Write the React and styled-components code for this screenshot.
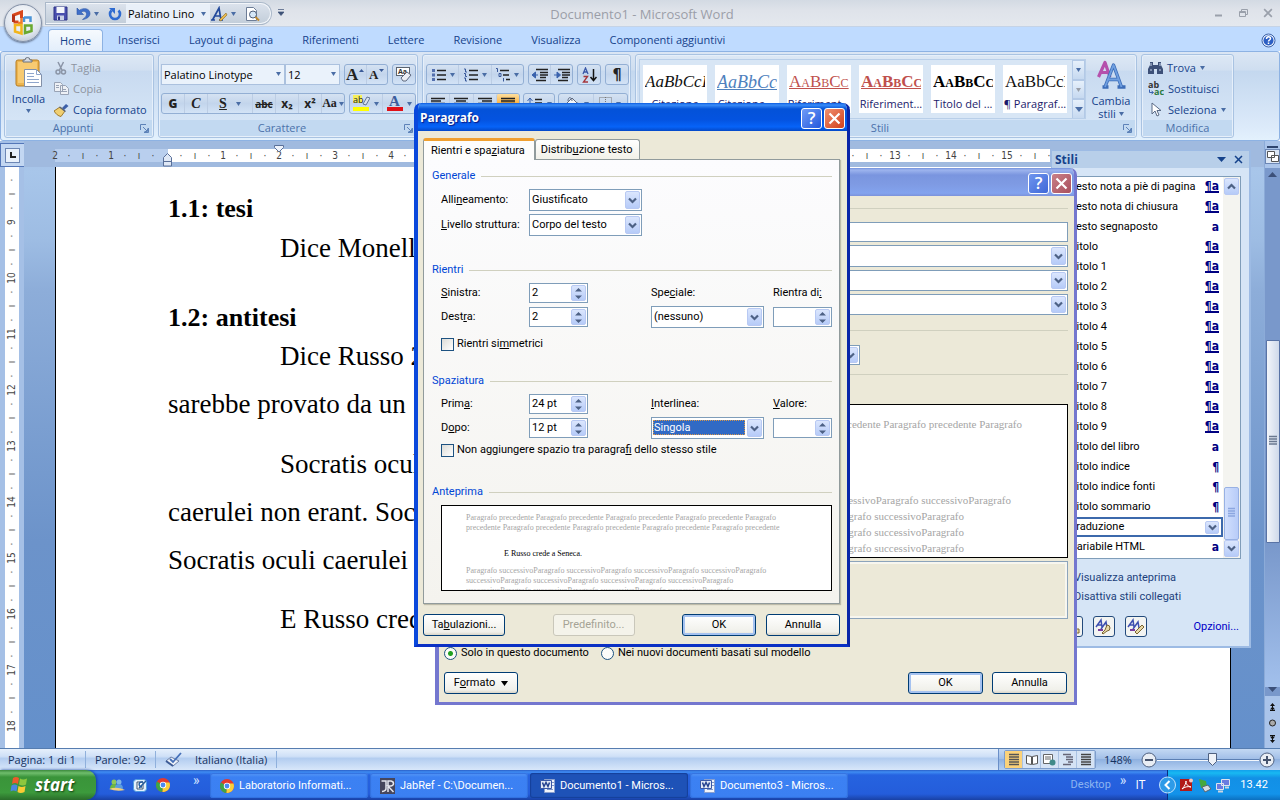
import React from 'react';
import styled, { createGlobalStyle, css } from 'styled-components';

const UI = '"Open Sans", "Noto Sans", sans-serif';
const TAHOMA = 'Roboto, "Noto Sans", sans-serif';
const RULER = '"DejaVu Sans Condensed", "DejaVu Sans", sans-serif';
const SERIF = '"Liberation Serif", serif';

const Global = createGlobalStyle`
  *, *::before, *::after { box-sizing: border-box; }
  body { margin: 0; font: 11px/16px ${UI}; color: #1e395b; overflow: hidden; }
  button, input, select { font: inherit; color: inherit; margin: 0; padding: 0; border-radius: 0; }
  button { background: none; border: 0; display: flex; align-items: center; justify-content: center; white-space: nowrap; }
  select { appearance: none; }
  svg { display: block; flex: none; }
  ul { list-style: none; margin: 0; padding: 0; }
  a { text-decoration: none; color: inherit; }
  h1, h2, p { margin: 0; font-size: inherit; font-weight: inherit; }
`;

/* ---------- window frame ---------- */
const Screen = styled.div`
  display: flex; flex-direction: column; height: 100vh; position: relative; overflow: hidden;
`;
const TitleBar = styled.header`
  display: flex; align-items: flex-start; height: 27px; padding-left: 46px;
  background: linear-gradient(#d3dae3, #dfe3ea 40%, #e4e8ee);
  border-bottom: 1px solid #c5d3e6;
`;
const QuickBar = styled.div`
  display: flex; align-items: center; height: 21px; margin-top: 3px; padding: 0 10px 0 7px;
  background: linear-gradient(#dbe2ec, #c3ceda); border: 1px solid #f3f6fa; border-left: 0; border-radius: 0 11px 11px 0;
  box-shadow: 0 0 0 1px #aab8c9;
`;
const QuickButton = styled.button`
  height: 18px; width: ${p => p.$w || 24}px; gap: 3px; justify-content: flex-start;
`;
const QuickFont = styled.select`
  width: 84px; height: 19px; border: 0; background: #e9f0f9; color: #000; padding-left: 2px;
`;
const SelectWrap = styled.span`
  display: flex; position: relative; width: ${p => p.$w}px;
  & > select { width: 100%; }
  & > svg { position: absolute; right: 4px; top: 8px; pointer-events: none; }
`;
const DocTitle = styled.h1`
  flex: 1; text-align: center; color: #9b9ea8; font-size: 13px; line-height: 28px; padding-right: 220px;
`;
const WindowButtons = styled.div`
  display: flex; gap: 14px; padding: 8px 7px 0 0;
`;
const OfficeButton = styled.button`
  position: absolute; left: 4px; top: 4px; width: 38px; height: 38px; border-radius: 50%; z-index: 3;
  background: radial-gradient(circle at 50% 35%, #fff, #dfe5ee 60%, #aab4c4); border: 1px solid #8390a6;
  box-shadow: 0 1px 2px #5d6c86;
`;
const TabStrip = styled.nav`
  display: flex; align-items: stretch; height: 24px; padding: 2px 4px 0 48px; background: #bfdbff;
`;
const RibbonTab = styled.button`
  padding: 0 14px 0 15px; color: #15428b;
  ${p => p.$active && css`
    padding: 0 11px; border: 1px solid #8db2e3; border-bottom: 0; border-radius: 4px 4px 0 0;
    background: linear-gradient(#f6fafe, #e3eefb);
  `}
`;
const Spacer = styled.span`flex: 1;`;
const Ribbon = styled.section`
  display: flex; gap: 4px; height: 90px; padding: 2px 4px 2px 3px; border: 1px solid #8db2e3; border-radius: 3px;
  background: linear-gradient(#dbe6f4, #cfdef0 20%, #c4d8ef 22%, #dceafa 85%, #e3f1fd);
  margin: 0; flex: none;
`;
const Group = styled.section`
  display: flex; flex-direction: column; justify-content: space-between; width: ${p => p.$w}px; flex: none;
  border: 1px solid #a9c3e2; border-radius: 3px; overflow: hidden;
  box-shadow: inset 0 0 0 1px #e6effa; background: linear-gradient(#dde8f5, #d2e0f1 18%, #c8daf0 20%, #d9e8f8);
`;
const WideGroup = styled(Group)`flex: 1; width: auto; max-width: 502px;`;
const GroupBody = styled.div`
  display: flex; flex: 1; min-height: 0; padding: ${p => p.$pad || '4px 3px 0'}; gap: ${p => p.$gap || 0}px;
`;
const GroupLabel = styled.h2`
  display: flex; align-items: center; height: 16px; margin: 0 1px 1px; background: #c2d9f1; color: #4b72ab;
  span { flex: 1; text-align: center; }
  svg { margin-right: 3px; }
`;
const Stack = styled.div`
  display: flex; flex-direction: column; gap: ${p => p.$gap || 0}px; align-items: ${p => p.$align || 'flex-start'};
`;
const Row = styled.div`display: flex; align-items: center; gap: ${p => p.$gap || 0}px;`;
const BigButton = styled.button`
  flex-direction: column; justify-content: flex-start; width: ${p => p.$w}px; color: #15428b; line-height: 13px;
  gap: ${p => p.$gap || 0}px;
`;
const LineButton = styled.button`
  height: 22px; gap: 4px; justify-content: flex-start; color: ${p => p.$off ? '#8d94a0' : '#15428b'};
`;
const ToolSet = styled.div`
  display: flex; align-items: stretch; height: 21px; width: ${p => p.$w}px;
  border: 1px solid #93afd4; border-radius: 3px; background: linear-gradient(#d5e2f2, #c3d5ec 50%, #d3e3f6);
`;
const Tool = styled.button`
  flex: ${p => p.$grow || 1}; gap: ${p => p.$gap || 4}px; color: #222; font: ${p => p.$font || 'inherit'};
  & + & { border-left: 1px solid #bccde4; }
  ${p => p.$on && css`background: linear-gradient(#fddfa0, #fdb23f 50%, #fee087); border-radius: 2px;`}
`;
const Combo = styled.select`
  height: 21px; border: 1px solid #abc1de; background: #eaf2fb; color: #000; padding-left: 2px;
`;
const Gallery = styled.div`
  display: flex; flex: 1; min-width: 0; border: 1px solid #b9cfe9; background: #d8e6f5; padding: 5px 0 0 3px; height: 60px; overflow: hidden;
`;
const StyleTile = styled.button`
  flex-direction: column; justify-content: flex-end; width: 64px; height: 48px; margin-right: 8px; background: #fff;
  color: #1b1b6b; overflow: hidden; line-height: 18px; flex: none;
  b { display: block; width: 60px; overflow: hidden; font: ${p => p.$font}; line-height: 26px; color: ${p => p.$color}; text-align: left;
      text-decoration: ${p => (p.$line ? 'underline' : 'none')}; }
  span { display: block; width: 64px; text-align: center; }
`;
const GalleryScroll = styled.div`
  display: flex; flex-direction: column; width: 15px; margin: -5px 0 0 -3px; height: 59px;
  button { flex: 1; border: 1px solid #b3c9e6; background: linear-gradient(#e6f0fb, #c6d9f0); }
`;

/* ---------- document area ---------- */
const Work = styled.main`
  display: flex; flex: 1; min-height: 0; position: relative;
  background: linear-gradient(#9fb9df 0, #a8c6ea 30px, #9dbce3 100px, #8dadd9 150px, #6c93ca 400px, #6490cb);
`;
const RulerColumn = styled.div`display: flex; flex-direction: column; width: 24px; background: #a5c0e6; flex: none;`;
const TabPicker = styled.button`
  width: 25px; height: 24px; margin-top: 2px; border: 1px solid #5477b8; background: #c3d7f2; flex: none;
  span { display: flex; align-items: center; justify-content: center; width: 15px; height: 15px; border: 1px solid #6d87b5; background: #e9f1fb; }
`;
const VerticalRuler = styled.div`
  display: flex; flex-direction: column; width: 14px; margin-left: 5px; padding-top: 6px; background: #fff; flex: 1; min-height: 0; overflow: hidden;
`;
const Tick = styled.span`
  flex: none; display: flex; align-items: center; justify-content: center; width: 14px; height: 14px; color: #444; font: 10px/14px ${RULER};
  ${p => p.$turn && css`transform: rotate(-90deg);`}
`;
const PageColumn = styled.div`display: flex; flex-direction: column; flex: 1; min-width: 0;`;
const HorizontalRuler = styled.div`
  display: flex; height: 26px; padding: 8px 214px 5px 24px; background: #a0badf; overflow: hidden; flex: none;
`;
const RulerScale = styled.div`
  display: flex; flex: 1; height: 13px; overflow: hidden; align-items: center;
  background: linear-gradient(90deg, transparent 7px, #b9cfee 7px, #b9cfee 120px, #fff 120px); position: relative;
`;
const IndentMark = styled.svg`position: absolute; z-index: 1; top: ${p => p.$top}px; left: ${p => p.$left}px;`;
const Page = styled.article`
  flex: 1; margin: 0 33px 0 31px; padding: 22px 112px 0; background: #fff; border-left: 1px solid #000; border-right: 1px solid #000;
  color: #000; font: 27px/48px ${SERIF}; white-space: nowrap; overflow: hidden;
`;
const Heading = styled.h2`
  font: bold 26px/40px ${SERIF}; padding-top: ${p => p.$space || 0}px;
`;
const Line = styled.p`
  padding-left: ${p => (p.$indent ? 112 : 0)}px; line-height: ${p => p.$lh || 48}px; padding-top: ${p => p.$space || 0}px;
`;
const ScrollColumn = styled.div`
  display: flex; flex-direction: column; align-items: center; width: 16px; background: #aac4ea; flex: none; border-left: 1px solid #8cabd8; padding-top: 4px;
`;
const ScrollTrack = styled.div`
  display: flex; flex-direction: column; align-items: center; width: 15px; flex: 1; background: #7998cb; margin-top: 4px; padding: 3px 0;
`;
const ScrollThumb = styled.div`
  display: flex; align-items: center; justify-content: center; width: 14px; height: 203px; border: 1px solid #5973a5; border-radius: 1px;
  background: linear-gradient(90deg, #f2f5fa, #cfd9ea); margin-top: 163px;
`;
const ScrollRest = styled.div`flex: 1; width: 15px; background: linear-gradient(#7998cb, #a2c0ec);`;
const PageJump = styled.div`display: flex; flex-direction: column; gap: 8px; padding: 7px 0 5px; align-items: center;`;

/* ---------- styles pane ---------- */
const Pane = styled.aside`
  position: absolute; top: 150px; right: 29px; width: 200px; height: 498px; display: flex; flex-direction: column;
  background: #d6e5f6; border: 1px solid #9dbbe4; border-right-width: 2px; border-bottom-width: 2px; z-index: 1; color: #1c3f7c; font: 11px/14px ${TAHOMA};
`;
const PaneHeader = styled.header`
  display: flex; align-items: center; height: 17px; background: #b8cfe9; padding: 0 6px 0 3px; gap: 8px; color: #15428b; font: bold 12px/16px ${UI};
`;
const StyleBox = styled.div`
  display: flex; height: 383px; margin: 8px 8px 0 6px; background: #fff; border: 1px solid #7f9db9; color: #000;
`;
const StyleList = styled.ul`flex: 1; min-width: 0;`;
const StyleItem = styled.li`
  display: flex; height: 20px; align-items: center; padding: 0 2px 0 9px; white-space: nowrap; border: 2px solid ${p => (p.$on ? '#3c69ac' : 'transparent')};
  span { flex: 1; }
`;
const Mark = styled.b`
  font: bold 12px/12px ${RULER}; color: #000080; border-bottom: ${p => (p.$u ? '2px solid #000080' : '0')}; height: ${p => (p.$u ? 12 : 13)}px;
  display: flex; align-items: center;
`;
const ListScroll = styled.div`
  display: flex; flex-direction: column; width: 17px; background: #f4f4f0; padding: 1px; align-items: center;
`;
const XpArrow = styled.button`
  width: ${p => p.$w || 15}px; height: ${p => p.$h || 17}px; border: 1px solid #b8c9f3; border-radius: 2px; background: linear-gradient(#dbe6fd, #b6cbf8); flex: none;
`;
const ListThumb = styled.div`
  display: flex; align-items: center; justify-content: center; width: 15px; height: 53px; border: 1px solid #98b1e4; border-radius: 2px;
  background: linear-gradient(90deg, #d1dffd, #b8ccf8);
`;
const PaneGap = styled.div`height: 9px;`;
const PaneLabel = styled.label`display: flex; align-items: center; gap: 4px; height: 19px; padding-left: 5px; white-space: nowrap;`;
const PaneTools = styled.div`
  display: flex; align-items: center; gap: 10px; padding: 10px 10px 0 9px;
  a { margin-left: auto; color: #0000c8; }
`;
const PaneTool = styled.button`width: 22px; height: 21px; border: 1px solid #234a7c; border-radius: 3px; background: #f3f4f2;`;

/* ---------- XP dialogs ---------- */
const Dialog = styled.section`
  position: absolute; left: ${p => p.$x}px; top: ${p => p.$y}px; width: ${p => p.$w}px; height: ${p => p.$h}px; z-index: ${p => p.$z};
  display: flex; flex-direction: column; border-radius: 7px 7px 0 0; overflow: hidden; background: #ece9d8; color: #000; font: 11px/14px ${TAHOMA};
  border: solid #7477cf; border-width: 0 3px 3px 4px;
  ${p => p.$active && css`border-color: #0a48dc #0a25a8 #0a30c4 #0a48dc;`}
`;
const DialogTitle = styled.header`
  display: flex; align-items: center; gap: 2px; height: 28px; margin: 0 -3px 0 -4px; padding: 2px 5px 0 6px; flex: none;
  background: ${p => (p.$active ? 'linear-gradient(#0a5be0, #3a8cf8 2px, #0452d8 6px, #0453e0 60%, #0663f8 85%, #0448c8)' : 'linear-gradient(#7090dc, #9db4ee 2px, #7a95df 7px, #7f9be4 60%, #83a3ee 90%, #7c92da)')};
  h1 { flex: 1; color: #fff; font: bold 12px/18px ${UI}; text-shadow: 1px 1px 1px #0a1883; }
`;
const CaptionButton = styled.button`
  width: 21px; height: 21px; border: 1px solid #fff; border-radius: 3px; color: #fff; font: 600 17px/18px ${UI};
  background: ${p => p.$bg};
`;
const TabRow = styled.div`display: flex; align-items: flex-end; padding: 7px 4px 0 5px; height: 28px; flex: none;`;
const SheetTab = styled.button`
  height: ${p => (p.$active ? 22 : 20)}px; padding: 0 ${p => (p.$active ? 9 : 6)}px 0 ${p => (p.$active ? 7 : 5)}px; border: 1px solid #919b9c; border-bottom: 0; border-radius: 3px 3px 0 0;
  background: linear-gradient(#fff, #f2f1e9); margin-bottom: ${p => (p.$active ? -1 : 0)}px;
  ${p => p.$active && css`border-top: 3px solid #f0a030; background: #fdfdfc; position: relative;`}
`;
const Sheet = styled.div`
  display: flex; flex-direction: column; margin: 0 7px 0 5px; padding: 9px 7px 0 8px; height: 445px;
  border: 1px solid #919b9c; background: linear-gradient(#fcfcfe, #f4f3ee); box-shadow: 1px 1px 1px #bdbba9;
`;
const Legend = styled.h2`
  display: flex; align-items: center; gap: 6px; height: 14px; color: #0046d5; margin-top: ${p => p.$top || 0}px; flex: none;
  &::after { content: ''; flex: 1; height: 1px; background: #d0d0bf; }
`;
const Fields = styled.div`
  display: grid; grid-template-columns: 88px 59px 63px 113px 9px 59px; grid-template-rows: ${p => p.$rows}; row-gap: 3px; align-items: center;
  margin: 6px 0 0 9px;
`;
const Label = styled.label`grid-column: ${p => p.$col || 1}; white-space: nowrap;`;
const Picker = styled.span`
  display: flex; grid-column: ${p => p.$col || 'auto'}; height: ${p => p.$h || 22}px; width: ${p => p.$w || '113px'}; padding: 1px; border: 1px solid #7f9db9; background: #fff;
  select { flex: 1; min-width: 0; border: 0; background: #fff; padding-left: 1px; outline: 0; }
  ${p => p.$selected && css`select { background: #316ac5; color: #fff; margin: 1px 2px 2px 0; outline: 1px dotted #d8974a; outline-offset: -1px; }`}
`;
const SpinBox = styled.span`
  display: flex; grid-column: ${p => p.$col || 'auto'}; height: 20px; width: 59px; padding: 1px; border: 1px solid #7f9db9; background: #fff;
  input { flex: 1; min-width: 0; border: 0; background: none; padding-left: 1px; }
`;
const Check = styled.label`
  display: flex; align-items: center; gap: 3px; height: 14px; margin: ${p => p.$top}px 0 0 9px; flex: none;
  input { appearance: none; width: 13px; height: 13px; border: 1px solid #1d5281; background: linear-gradient(135deg, #dcdcd7, #fff); }
`;
const Preview = styled.div`
  height: ${p => p.$h}px; border: 1px solid #000; background: #fff; overflow: hidden; color: #a5a5a5; white-space: nowrap; flex: none;
`;
const PreviewFrame = styled.div`margin: 6px 0 0 9px;`;
const MiniText = styled.div`
  padding: 7px 0 0 24px; font: 8px/10px ${SERIF};
  b { display: block; color: #000; padding: 16px 0 7px 38px; font-weight: normal; }
  span { display: block; }
`;
const XpButton = styled.button`
  width: ${p => p.$w}px; height: 22px; border: 1px solid #003c74; border-radius: 3px; background: linear-gradient(#fff, #f0f0ea 85%, #d9d5c8); gap: 6px; color: #000;
  ${p => p.$primary && css`box-shadow: inset 0 0 0 2px #a5c2f0;`}
  &:disabled { color: #a5a395; border-color: #c9c7ba; background: #f4f3ea; }
`;
const ButtonRow = styled.div`
  display: flex; align-items: center; padding: ${p => p.$pad}; gap: ${p => p.$gap}px;
`;
const Rule = styled.hr`border: 0; border-top: 1px solid #d0d0bf; height: 0; margin: ${p => p.$m}; flex: none;`;
const ModifyBody = styled.div`display: flex; flex-direction: column; align-items: stretch; padding: 12px 6px 0 5px;`;
const NameInput = styled.input`height: 20px; border: 1px solid #7f9db9; background: #fff; margin: 13px 0 3px;`;
const PickerRow = styled.div`display: flex; flex-direction: column; gap: 3px;`;
const PreviewLine = styled.p`
  font: 11px/16px ${SERIF}; text-align: right; padding-right: ${p => p.$end}px; margin-top: ${p => p.$top || 0}px;
`;
const Description = styled.div`height: 58px; border: 1px solid #8ca4bb; box-shadow: inset 0 0 0 2px #f7f6ef; margin-top: 3px;`;
const Radio = styled.label`
  display: flex; align-items: center; gap: 4px;
  input { appearance: none; width: 13px; height: 13px; border: 1px solid #1d5281; border-radius: 50%; background: #fbfbf9; }
  input:checked { background: radial-gradient(circle, #21a121 0 2px, #fbfbf9 3px); }
`;

/* ---------- status bar and taskbar ---------- */
const StatusBar = styled.footer`
  display: flex; align-items: center; height: 22px; flex: none; padding: 0 5px 0 8px; color: #15325f;
  border-top: 1px solid #567db0; background: linear-gradient(#e6f0fc, #cfe0f7 35%, #b3cdf0 45%, #d8e7fa);
`;
const StatusItem = styled.span`
  padding: 0 9px 0 ${p => p.$l || 0}px; border-right: 1px solid #8fb0dc; line-height: 17px; margin-right: 9px; white-space: nowrap;
`;
const ViewSet = styled.div`
  display: flex; height: 19px; border: 1px solid #7d9dcc; border-radius: 2px; margin-right: 8px; background: #d5e3f5;
  button { width: 18px; border-right: 1px solid #aac2e2; }
  button:first-child { background: #fbd27a; }
`;
const ZoomValue = styled.span`width: 37px;`;
const ZoomLine = styled.div`
  position: relative; display: flex; align-items: center; width: 102px; height: 20px;
  &::before { content: ''; width: 100%; height: 1px; background: #5b7fb3; box-shadow: 0 1px #f2f7fd; }
  svg { position: absolute; left: 51px; top: 3px; }
`;
const ZoomRight = styled.div`
  display: flex; align-items: center; height: 21px; padding-left: 5px; border-left: 1px solid #6a8fc8; margin-right: -5px; padding-right: 5px;
  background: linear-gradient(#c3d8f3, #a3c0e8 45%, #8fb1e0 50%, #b5d0f2);
`;
const Taskbar = styled.footer`
  display: flex; align-items: stretch; height: 30px; flex: none; color: #fff; font: 11px/14px ${TAHOMA};
  background: linear-gradient(#2a60c8, #3f8cf3 2px, #2663e0 5px, #245ddb 80%, #1941a5);
`;
const Start = styled.button`
  width: 96px; border-radius: 0 10px 10px 0; gap: 6px; padding-right: 12px; font: italic bold 17px/24px ${UI}; text-shadow: 1px 1px 2px #123c0f; color: #fff;
  background: linear-gradient(#3c8a3c, #6fbd6c 3px, #3a943a 7px, #3c9a3c 75%, #2a6c2a); box-shadow: 1px 0 3px #123f9c;
`;
const QuickLaunch = styled.div`display: flex; align-items: center; gap: 8px; width: 113px; padding-left: 13px;
  span { margin: -10px 0 0 15px; color: #cfe0ff; font-size: 14px; }
`;
const Task = styled.button`
  flex: 0 1 158px; margin: 3px 1px 2px; padding-left: 10px; gap: 5px; justify-content: flex-start; border-radius: 3px;
  background: ${p => (p.$on ? '#1e52b7' : 'linear-gradient(#5a9bf8, #3c81f3 4px, #3b80f2)')};
  box-shadow: inset 0 0 1px 1px ${p => (p.$on ? '#15409a' : '#3270de')};
`;
const DeskTools = styled.div`display: flex; align-items: center; gap: 9px; padding-right: 22px; color: #8cb4f0;
  span { margin-top: -10px; font-size: 14px; color: #cfe0ff; } b { font: 12px/14px ${UI}; color: #fff; }
`;
const Tray = styled.div`
  display: flex; align-items: center; gap: 3px; padding-right: 12px; border-left: 1px solid #0b2f80; background: linear-gradient(#12a0ec, #18b9f2 3px, #1290e6 8px, #1393ea 80%, #0c70c0);
  svg:first-child { margin-left: -9px; } time { padding-left: 7px; }
`;

/* ---------- icons ---------- */
const Down = ({ c = '#4a6da5', s = 5 }) => <svg width={s} height={s > 5 ? 5 : 4} viewBox="0 0 5 3" preserveAspectRatio="none"><path d="M0 0h5L2.500 3z" fill={c} /></svg>;
const Up = () => <svg width="5" height="12" viewBox="0 0 5 12"><path d="M0 3h5L2.500 0z" fill="#3a5a98" /></svg>;
const DownHigh = () => <svg width="5" height="12" viewBox="0 0 5 12"><path d="M0 0h5L2.500 3z" fill="#3a5a98" /></svg>;
const Chevron = ({ up, w = 9 }) => (
  <svg width={w} height="7" viewBox="0 0 9 7"><path d={up ? 'M1 5.500L4.500 2L8 5.500' : 'M1 1.500L4.500 5L8 1.500'} stroke="#4d6185" strokeWidth="2.200" fill="none" /></svg>
);
const Launcher = () => (
  <svg width="9" height="9" viewBox="0 0 9 9" fill="none" stroke="#5d82b8"><path d="M.5 6V.5H6M8.500 4v4.500H4M3 3l4 4M7.500 4.500v3h-3" /></svg>
);
const Office = () => (
  <svg width="26" height="26" viewBox="0 0 26 26" fill="none">
    <path d="M3.500 12V5l8-3v6M3.500 12h5" stroke="#d8481c" strokeWidth="3" /><path d="M3.500 5v7" stroke="#b5331a" strokeWidth="3" />
    <path d="M14 7.500h6.500V12M14 7v5" stroke="#4a94d8" strokeWidth="2.500" /><path d="M11.500 8v5H8" stroke="#ee7a2d" strokeWidth="2.500" />
    <path d="M11.500 15H5v6.500l6.500 2z" stroke="#f2b51c" strokeWidth="2.500" /><path d="M15 15.500h6.500V21L15 23z" stroke="#6aa92f" strokeWidth="2.500" />
  </svg>
);
const Save = () => (
  <svg width="15" height="15" viewBox="0 0 15 15"><path d="M1 1h13v13H1z" fill="#4a4fae" stroke="#2d3285" /><path d="M3.500 1h8v6h-8z" fill="#f4f6fb" /><path d="M4 9.500h7V14H4z" fill="#c9d0e6" /><path d="M5 10.500h2V14H5z" fill="#2d3285" /></svg>
);
const Undo = () => <svg width="15" height="14" viewBox="0 0 15 14"><path d="M1 1v6.500h6.500L5.200 5.300C8 3 11 5 10.500 7.500 10.200 10 8.500 11 6.500 12.500c4-.5 7.500-2.500 7.500-6C14 1.500 8 .2 3.300 3.300z" fill="#3f6fc9" stroke="#2c55a5" strokeWidth=".6" /></svg>;
const Redo = () => <svg width="14" height="14" viewBox="0 0 14 14"><path d="M3.500 3.500A5 5 0 1 0 10.500 3.500" fill="none" stroke="#2e6bd0" strokeWidth="2.600" /><path d="M1 1h6v6z" fill="#2e6bd0" /></svg>;
const APen = () => (
  <svg width="18" height="16" viewBox="0 0 18 16"><path d="M1 14h4M9 14h4M2.500 14L9 2l2 12M5 10h5" fill="none" stroke="#234a9c" strokeWidth="1.700" /><path d="M9 14l7-7 1 2-6 6z" fill="#e9b94e" stroke="#8b6a1f" strokeWidth=".6" /></svg>
);
const PageFind = () => (
  <svg width="16" height="16" viewBox="0 0 16 16"><path d="M2.500 1.500h7l3 3v10h-10z" fill="#fff" stroke="#6d7d96" /><circle cx="9" cy="8.500" r="3.500" fill="#d6e8f8" stroke="#4d5d78" /><path d="M11.500 11l3.500 3.500" stroke="#c08a2f" strokeWidth="2" /></svg>
);
const Clipboard = () => (
  <svg width="28" height="31" viewBox="0 0 28 31"><rect x="1" y="3" width="23" height="26" rx="2" fill="#edb54f" stroke="#b67c22" /><path d="M3 5h19v21H3z" fill="#f7ca72" /><path d="M8 5V3h2a2.500 2.500 0 0 1 5 0h2v2z" fill="#d5dae1" stroke="#68717f" /><path d="M9.500 12.500h12l5 5v12h-17z" fill="#fff" stroke="#8290a8" /><path d="M21.500 12.500v5h5M12 16.500h7M12 19.500h7M12 22.500h12M12 25.500h12" stroke="#8fa6cc" fill="none" /></svg>
);
const Scissors = () => <svg width="13" height="14" viewBox="0 0 13 14" fill="none" stroke="#8b95a6" strokeWidth="1.500"><path d="M4 1l4 8M9.500 1L5.500 9" /><circle cx="4" cy="11" r="2" /><circle cx="9.500" cy="11" r="2" /></svg>;
const CopyIcon = () => <svg width="15" height="13" viewBox="0 0 15 13" fill="#eef1f6" stroke="#99a3b5"><path d="M.5.5h6l2 2v7h-8zM6.500 3.500h5l3 3v6h-8z" /><path d="M8 7.500h4M8 9.500h5M2 3.500h3M2 5.500h3" /></svg>;
const Brush = () => <svg width="15" height="14" viewBox="0 0 15 14"><path d="M8 5l4-4 2.500 2-4.500 4z" fill="#3c5fa8" /><path d="M0 8l6-4 5 4-4 5.500C4 13 2 11 0 8z" fill="#f0cf72" stroke="#a07a2a" /><path d="M5.500 4l6 4.500" stroke="#5a6478" strokeWidth="1.500" /></svg>;
const Eraser = () => <svg width="18" height="17" viewBox="0 0 18 17"><rect x="1.500" y="1.500" width="13" height="8" fill="#fff" stroke="#5b6470" /><text x="3" y="8" fontSize="7" fontFamily="Open Sans" fontWeight="bold" fill="#333">Aa</text><path d="M6 12l6-6 4 3-5 6H8z" fill="#eceff5" stroke="#5f6a80" /></svg>;
const Lines = ({ rows, c = '#222', w = 14 }) => (
  <svg width={w} height="13" viewBox={`0 0 ${w} 13`}><path d={rows.map(([a, b], i) => `M${a} ${1.5 + i * 2.5}H${b}`).join('')} stroke={c} strokeWidth="1.400" /></svg>
);
const Bullets = ({ kind }) => (
  <svg width="15" height="14" viewBox="0 0 15 14">
    {kind === 'multi'
      ? <><path d="M5 2.500h9M8 7h6M11 11.500h4" stroke="#222" strokeWidth="1.300" /><path d="M1 .5h1.500V4M4 5.500h2V8.500H4zM8.500 10v3.500" fill="none" stroke="#39589a" /></>
      : <><path d="M6 2.500h9M6 7h9M6 11.500h9" stroke="#222" strokeWidth="1.300" />{[2.5, 7, 11.5].map(y => kind === 'dot'
        ? <rect key={y} x="1" y={y - 1.5} width="3" height="3" fill="#5470ae" />
        : <path key={y} d={`M1 ${y - 1.5}h1.500V${y + 1.5}H4`} fill="none" stroke="#39589a" />)}</>}
  </svg>
);
const Indent = ({ right }) => (
  <svg width="16" height="14" viewBox="0 0 16 14"><path d="M4 1.500h12M8 4.500h8M8 7h8M8 9.500h6M4 12.500h10" stroke="#222" strokeWidth="1.400" /><path d={right ? 'M0 7h4M3 4l3.500 3L3 10z' : 'M6 7H2M3.500 4L0 7l3.500 3z'} stroke="#3a62ad" fill="#3a62ad" /></svg>
);
const Sort = () => (
  <svg width="15" height="16" viewBox="0 0 15 16" fill="none"><path d="M1 7l2.500-6L6 7M2 5h3" stroke="#3a57a8" strokeWidth="1.300" /><path d="M1.500 9.500h4L1.500 15h4.500" stroke="#a5363c" strokeWidth="1.400" /><path d="M11.500 2v11M8.500 10l3 3.500 3-3.500" stroke="#111" strokeWidth="1.500" /></svg>
);
const Spacing = () => <svg width="16" height="13" viewBox="0 0 16 13"><path d="M3 1v11M.5 4L3 1l2.500 3M.5 9L3 12l2.500-3" stroke="#3a62ad" fill="none" /><path d="M8 2.500h7M8 6h7M8 9.500h7" stroke="#222" strokeWidth="1.400" /></svg>;
const Bucket = () => <svg width="17" height="14" viewBox="0 0 17 14"><path d="M3 7l6-6 5 5-6 6z" fill="#f3f6fa" stroke="#5f6a80" /><path d="M5 4c0-5 4-4 4 0" stroke="#5f6a80" fill="none" /><path d="M14 6c2 2 2 4 1 5" stroke="#3a62ad" strokeWidth="2" fill="none" /></svg>;
const Borders = () => <svg width="13" height="13" viewBox="0 0 13 13"><path d="M.5.5h12v12H.5zM6.500 0v13M0 6.500h13" stroke="#777" strokeDasharray="1 1" fill="none" /></svg>;
const Highlight = () => (
  <svg width="17" height="17" viewBox="0 0 17 17"><path d="M0 0h9v8H0z" fill="#f5ef5a" /><text x="0" y="8" fontSize="9" fontFamily="Open Sans" fill="#222">ab</text><path d="M10 9l4-7 3 1-4 7z" fill="#d8e2f0" stroke="#4a5d80" strokeWidth=".8" /><path d="M0 12h16v4H0z" fill="#ffff00" /></svg>
);
const FontColor = () => <svg width="16" height="17" viewBox="0 0 16 17"><text x="2" y="11" fontSize="15" fontWeight="bold" fontFamily="Liberation Serif" fill="#3b5d9d">A</text><path d="M0 12h16v4H0z" fill="#e01018" /></svg>;
const CambiaIcon = () => (
  <svg width="30" height="30" viewBox="0 0 30 30" fill="none" strokeLinejoin="round">
    <path d="M2.500 18L9 3.500l5 14.500M4.500 13.500h8" stroke="#b551ac" strokeWidth="3.200" />
    <path d="M9 28L17.500 6l8 22M12 20.500h11M6.500 28h6M21.500 28h8" stroke="#3d6db8" strokeWidth="3.400" />
    <path d="M9 28L17.500 6l8 22M12 20.500h11" stroke="#6f9fe0" strokeWidth="1.800" />
  </svg>
);
const Binoculars = () => <svg width="15" height="13" viewBox="0 0 15 13"><path d="M2 1h3v3h5V1h3v3l2 4v5H9V8H6v5H0V8l2-4z" fill="#3d5078" /><path d="M2 9h2M11 9h2M3 2v3M12 2v3" stroke="#c7d4ea" /></svg>;
const Replace = () => (
  <svg width="16" height="15" viewBox="0 0 16 15" fontFamily="Open Sans" fontSize="9" fontWeight="bold"><text x="0" y="7" fill="#333">ab</text><text x="6" y="14" fill="#2b7a3f">ac</text><path d="M1.500 8.500v3H5M3.500 10l2 1.500-2 1.500" fill="none" stroke="#3a62ad" /></svg>
);
const Pointer = () => <svg width="16" height="15" viewBox="0 0 16 15"><path d="M4 1v11l3-3 2 5 2-1-2-4.500h4z" fill="#fff" stroke="#5a6a85" /></svg>;
const HelpBadge = () => <svg width="15" height="15" viewBox="0 0 15 15"><circle cx="7.500" cy="7.500" r="6.500" fill="#e8f0fb" stroke="#3d62a8" /><circle cx="7.500" cy="7.500" r="5" fill="#2c5fc4" /><path d="M5.500 6c0-3 4-3 4-.5C9.500 7 7.500 7 7.500 8.500M7.500 9.500v1.500" stroke="#fff" strokeWidth="1.500" fill="none" /></svg>;
const Cross = ({ c = '#fff', s = 13, w = 2.2 }) => <svg width={s} height={s} viewBox="0 0 13 13"><path d="M1.500 1.500l10 10M11.500 1.500l-10 10" stroke={c} strokeWidth={w} /></svg>;
const Chrome = () => (
  <svg width="14" height="14" viewBox="0 0 14 14"><circle cx="7" cy="7" r="7" fill="#e33b2e" /><path d="M7 7L.9 3.500A7 7 0 0 0 6.500 14z" fill="#3ea548" /><path d="M7 7l-.5 7A7 7 0 0 0 13.500 4.500H7z" fill="#f9d03b" /><circle cx="7" cy="7" r="3.200" fill="#fff" /><circle cx="7" cy="7" r="2.400" fill="#4a8af0" /></svg>
);
const WordIcon = () => <svg width="15" height="16" viewBox="0 0 15 16"><path d="M4.500 1.500h10v13h-10z" fill="#f2f5fb" stroke="#8aa0cf" /><path d="M7 11.500h6M12 4.500h2M12 7.500h2" stroke="#7e96c8" /><path d="M.5 2.500h11v8H.5z" fill="#e4eaf6" stroke="#3b58a6" /><path d="M2.500 4.500l1.500 4 2-4 2 4 1.500-4" stroke="#24418f" strokeWidth="1.500" fill="none" /></svg>;
const JabRef = () => <svg width="15" height="16" viewBox="0 0 15 16"><path d="M0 0h15v16H0z" fill="#46465c" /><path d="M1.500 3H6v7.500Q6 13 2 13.500M8 14V3h3q2.500.5 2.500 2.500T11 8H8l5.500 6" stroke="#e5e6ee" strokeWidth="1.500" fill="none" /></svg>;
const Flag = () => <svg width="19" height="18" viewBox="0 0 19 18"><path d="M3 2q3-2 6 0L8 8q-3-2-6 0z" fill="#ec5a2c" /><path d="M10 2.500q3 2 7 0l-1 6q-3 2-7 0z" fill="#8ec73e" /><path d="M1.500 9.500q3-2 6 0l-1 6q-3-2-6 0z" fill="#4a86e0" /><path d="M8.500 10q3 2 7 0l-1 6q-4 2-7 0z" fill="#fbcb34" /></svg>;
const People = () => <svg width="16" height="14" viewBox="0 0 16 14"><circle cx="5" cy="4" r="2.500" fill="#8fc85a" /><circle cx="10" cy="4" r="2.500" fill="#7db5e8" /><path d="M1 11q0-5 4-5t5 5z" fill="#6db843" /><path d="M6 10q0-4 4-4t4 5z" fill="#5b9de0" /><path d="M0 11q8-3 16 1-8 2-16-1z" fill="#f2cf7e" /></svg>;
const Desk = () => <svg width="15" height="15" viewBox="0 0 15 15"><rect x=".5" y="1.500" width="13" height="12" rx="3" fill="#e3f0fc" stroke="#4d9ade" /><path d="M4 4h6v7H4z" fill="#fff" stroke="#41566f" /><path d="M6 10l7-7M10 4c-5-1-5 5-1 5" stroke="#245c9e" strokeWidth="1.500" fill="none" /></svg>;
const Spell = () => <svg width="18" height="15" viewBox="0 0 18 15"><path d="M1 9l5-4 8 4-6 5z" fill="#eef2f9" stroke="#6b7fa6" /><path d="M1 9l7 5" stroke="#3d5c97" strokeWidth="2" /><path d="M5 7l3 3 8-9" stroke="#4570b8" strokeWidth="1.800" fill="none" /></svg>;
const Jump = ({ kind }) => (
  <svg width="7" height="8" viewBox="0 0 7 8">{kind === 'dot' ? <circle cx="3.500" cy="4" r="3" fill="#aaa" stroke="#222" /> : <path d={kind === 'up' ? 'M1 3L3.500 0 6 3H4v1l2 2.500H4V7h2v1H1V7h2v-.5H1L3 4V3z' : 'M1 5l2.500 3L6 5H4V4l2-2.500H4V1h2V0H1v1h2v.5H1L3 4v1z'} fill="#111" />}</svg>
);
const Zoom = ({ plus }) => <svg width="16" height="16" viewBox="0 0 16 16"><circle cx="8" cy="8" r="7" fill="#e8edf4" stroke="#4f6180" /><path d={plus ? 'M4 8h8M8 4v8' : 'M4 8h8'} stroke="#46546e" strokeWidth="2" /></svg>;
const StyleTool = ({ c }) => <svg width="18" height="17" viewBox="0 0 18 17"><path d="M1 9l5-7 1 7M3 7h4M6 11l5-7 1 6" stroke="#3d4fb0" strokeWidth="1.500" fill="none" /><path d={c} fill="#e8d9a8" stroke="#7a6430" /><path d="M3 12h5" stroke="#7a3c9c" strokeWidth="2" /></svg>;
const SpinArrows = () => <svg width="9" height="13" viewBox="0 0 9 13"><path d="M1 4.500L4.500 1 8 4.500zM1 8.500L4.500 12 8 8.500z" fill="#4d6185" /></svg>;

/* ---------- small composites ---------- */
const Center = styled.span`display: flex; align-items: center; justify-content: center; width: 100%; height: 100%;`;
const Inline = styled.span`display: flex; align-items: center; justify-content: center; gap: 3px;`;
const QuickMore = styled.button`width: 20px; height: 24px;`;
const RulerToggle = styled.button`width: 15px; height: 15px; border: 1px solid #6c87b5; background: #dbe6f5;`;

function Choice({ id, value, label, ...rest }) {
  return (
    <Picker {...rest}>
      <select id={id} aria-label={label} defaultValue={value}><option>{value}</option></select>
      <XpArrow as="span" $w={15} $h={rest.$h ? rest.$h - 4 : 18}><Center><Chevron /></Center></XpArrow>
    </Picker>
  );
}
function Spin({ id, value = '', $col }) {
  return (
    <SpinBox $col={$col}>
      <input id={id} defaultValue={value} />
      <XpArrow $w={15} $h={16} aria-label="Incrementa"><SpinArrows /></XpArrow>
    </SpinBox>
  );
}
const rulerNumbers = ['2', '1', '', '1', '2', '3', '4', '5', '6', '7', '8', '9', '10', '11', '12', '13', '14', '15'];
const verticalNumbers = [9, 10, 11, 12, 13, 14, 15, 16, 17, 18];
const tiles = [
  ['AaBbCcI', 'Citazione', `italic 17px ${SERIF}`, '#111', false],
  ['AaBbCc', 'Citazione ...', `italic 18px ${SERIF}`, '#4f81bd', true],
  ['AaBbCc', 'Riferiment...', `small-caps 17px ${SERIF}`, '#c0504d', true],
  ['AaBbCc', 'Riferiment...', `small-caps bold 17px ${SERIF}`, '#c0504d', true],
  ['AaBbCc', 'Titolo del ...', `small-caps bold 17px ${SERIF}`, '#000', false],
  ['AaBbCcI', '¶ Paragraf...', `17px ${SERIF}`, '#111', false],
];
const styleNames = [
  ['Testo nota a piè di pagina', '¶a'], ['Testo nota di chiusura', '¶a'], ['Testo segnaposto', 'a'], ['Titolo', '¶a'],
  ...[1, 2, 3, 4, 5, 6, 7, 8, 9].map(n => [`Titolo ${n}`, '¶a']),
  ['Titolo del libro', 'a'], ['Titolo indice', '¶'], ['Titolo indice fonti', '¶'], ['Titolo sommario', '¶'], ['Traduzione', 'v'], ['Variabile HTML', 'a'],
];
const full = [[0, 14], [0, 14], [0, 14], [0, 14], [0, 14]];

function StylesPane() {
  return (
    <Pane>
      <PaneHeader><span>Stili</span><Spacer /><Down c="#15428b" s={9} /><Cross c="#15428b" s={9} /></PaneHeader>
      <StyleBox>
        <StyleList>
          {styleNames.map(([name, mark]) => (
            <StyleItem key={name} $on={mark === 'v'}>
              <span>{name}</span>
              {mark === 'v' ? <XpArrow $w={14} $h={13} aria-label="Apri"><Chevron /></XpArrow> : <Mark $u={mark === '¶a'}>{mark}</Mark>}
            </StyleItem>
          ))}
        </StyleList>
        <ListScroll>
          <XpArrow aria-label="Su"><Chevron up /></XpArrow><Spacer />
          <ListThumb><Lines w={7} c="#8ca6e0" rows={[[0, 7], [0, 7], [0, 7], [0, 7]]} /></ListThumb>
          <XpArrow aria-label="Giù"><Chevron /></XpArrow>
        </ListScroll>
      </StyleBox>
      <div>
        <PaneGap />
        <PaneLabel><input type="checkbox" />Visualizza anteprima</PaneLabel>
        <PaneLabel><input type="checkbox" />Disattiva stili collegati</PaneLabel>
      </div>
      <PaneTools>
        <PaneTool aria-label="Nuovo stile"><StyleTool c="M11 11h5v4h-5z" /></PaneTool>
        <PaneTool aria-label="Controllo stili"><StyleTool c="M12 7a3 3 0 1 1 0 6l-4 3-1-1 3-3z" /></PaneTool>
        <PaneTool aria-label="Gestisci stili"><StyleTool c="M8 14l7-7 2 2-7 7z" /></PaneTool>
        <a href="#opzioni">Opzioni...</a>
      </PaneTools>
    </Pane>
  );
}

function ModifyDialog() {
  return (
    <Dialog $x={435} $y={168} $w={642} $h={537} $z={2}>
      <DialogTitle>
        <Spacer />
        <CaptionButton $bg="linear-gradient(135deg, #6f95ee, #3f68d8)" aria-label="Guida">?</CaptionButton>
        <CaptionButton $bg="linear-gradient(135deg, #c98088, #a9505e)" aria-label="Chiudi"><Cross /></CaptionButton>
      </DialogTitle>
      <ModifyBody>
        <Rule $m="0" />
        <NameInput aria-label="Nome" />
        <PickerRow>
          <Choice $w="auto" label="Tipo stile" value="" />
          <Choice $w="auto" label="Stile basato su" value="" $h={21} />
          <Choice $w="auto" label="Stile per il paragrafo successivo" value="" $h={21} />
        </PickerRow>
        <Rule $m="15px 0 14px" />
        <Choice $w="416px" label="Colore" value="" $h={20} />
        <Rule $m="9px 0 29px" />
        <Preview $h={154}>
          <PreviewLine $top={11} $end={45}>Paragrafo precedente Paragrafo precedente Paragrafo</PreviewLine>
          <PreviewLine $top={60} $end={56}>successivoParagrafo successivoParagrafo</PreviewLine>
          <PreviewLine $end={103}>successivoParagrafo successivoParagrafo</PreviewLine>
          <PreviewLine $end={103}>successivoParagrafo successivoParagrafo</PreviewLine>
          <PreviewLine $end={103}>successivoParagrafo successivoParagrafo</PreviewLine>
        </Preview>
        <Description />
        <ButtonRow $pad="27px 0 0 0" $gap={12}>
          <Radio><input type="radio" name="scope" defaultChecked />Solo in questo documento</Radio>
          <Radio><input type="radio" name="scope" />Nei nuovi documenti basati sul modello</Radio>
        </ButtonRow>
        <ButtonRow $pad="12px 1px 0 0" $gap={9}>
          <XpButton $w={74}><span>F<u>o</u>rmato</span><Down c="#000" s={7} /></XpButton><Spacer />
          <XpButton $w={75} $primary>OK</XpButton><XpButton $w={75}>Annulla</XpButton>
        </ButtonRow>
      </ModifyBody>
    </Dialog>
  );
}

function ParagraphDialog() {
  return (
    <Dialog $x={414} $y={103} $w={436} $h={544} $z={3} $active>
      <DialogTitle $active>
        <h1>Paragrafo</h1>
        <CaptionButton $bg="linear-gradient(135deg, #6f9cf8, #2458dc)" aria-label="Guida">?</CaptionButton>
        <CaptionButton $bg="linear-gradient(135deg, #f09070, #d2401c)" aria-label="Chiudi"><Cross /></CaptionButton>
      </DialogTitle>
      <TabRow>
        <SheetTab $active><span>Rientri e spa<u>z</u>iatura</span></SheetTab>
        <SheetTab><span>Distrib<u>u</u>zione testo</span></SheetTab>
      </TabRow>
      <Sheet>
        <Legend>Generale</Legend>
        <Fields $rows="22px 22px">
          <Label htmlFor="al">Alli<u>n</u>eamento:</Label><Choice id="al" $col="2 / 4" value="Giustificato" />
          <Label htmlFor="li"><u>L</u>ivello struttura:</Label><Choice id="li" $col="2 / 4" value="Corpo del testo" />
        </Fields>
        <Legend $top={27}>Rientri</Legend>
        <Fields $rows="20px 22px">
          <Label htmlFor="si"><u>S</u>inistra:</Label><Spin id="si" value="2" />
          <Label htmlFor="sp" $col={4}>Spe<u>c</u>iale:</Label><Label htmlFor="ri" $col={6}>Rientra di<u>:</u></Label>
          <Label htmlFor="de">Dest<u>r</u>a:</Label><Spin id="de" value="2" />
          <Choice id="sp" $col={4} value="(nessuno)" /><Spin id="ri" $col={6} />
        </Fields>
        <Check $top={9}><input type="checkbox" /><span>Rientri si<u>m</u>metrici</span></Check>
        <Legend $top={23}>Spaziatura</Legend>
        <Fields $rows="20px 22px">
          <Label htmlFor="pr">Prim<u>a</u>:</Label><Spin id="pr" value="24 pt" />
          <Label htmlFor="in" $col={4}><u>I</u>nterlinea:</Label><Label htmlFor="va" $col={6}><u>V</u>alore:</Label>
          <Label htmlFor="do">D<u>o</u>po:</Label><Spin id="do" value="12 pt" />
          <Choice id="in" $col={4} value="Singola" $selected /><Spin id="va" $col={6} />
        </Fields>
        <Check $top={4}><input type="checkbox" /><span>Non aggiungere spazio tra paragra<u>f</u>i dello stesso stile</span></Check>
        <Legend $top={28}>Anteprima</Legend>
        <PreviewFrame>
          <Preview $h={86}>
            <MiniText>
              <span>Paragrafo precedente Paragrafo precedente Paragrafo precedente Paragrafo precedente Paragrafo</span>
              <span>precedente Paragrafo precedente Paragrafo precedente Paragrafo precedente Paragrafo precedente</span>
              <b>E Russo crede a Seneca.</b>
              <span>Paragrafo successivoParagrafo successivoParagrafo successivoParagrafo successivoParagrafo</span>
              <span>successivoParagrafo successivoParagrafo successivoParagrafo successivoParagrafo</span>
              <span>successivoParagrafo successivoParagrafo successivoParagrafo successivoParagrafo</span>
            </MiniText>
          </Preview>
        </PreviewFrame>
      </Sheet>
      <ButtonRow $pad="10px 7px 0 5px" $gap={10}>
        <XpButton $w={82}><span>Ta<u>b</u>ulazioni...</span></XpButton><Spacer />
        <XpButton $w={82} disabled>Predefinito...</XpButton><Spacer />
        <XpButton $w={74} $primary>OK</XpButton><XpButton $w={74}>Annulla</XpButton>
      </ButtonRow>
    </Dialog>
  );
}

function RibbonBar() {
  return (
    <Ribbon>
      <Group $w={150}>
        <GroupBody $pad="2px 3px 0 1px" $gap={3}>
          <BigButton $w={45} $gap={4}><Clipboard />Incolla<Down /></BigButton>
          <Stack>
            <LineButton $off><Scissors />Taglia</LineButton>
            <LineButton $off><CopyIcon />Copia</LineButton>
            <LineButton><Brush />Copia formato</LineButton>
          </Stack>
        </GroupBody>
        <GroupLabel><span>Appunti</span><Launcher /></GroupLabel>
      </Group>
      <Group $w={260}>
        <GroupBody $pad="9px 2px 0">
          <Stack $gap={8}>
            <Row $gap={4}>
              <Row>
                <SelectWrap $w={124}><Combo aria-label="Tipo di carattere" defaultValue="p"><option value="p">Palatino Linotype</option></Combo><Down /></SelectWrap>
                <SelectWrap $w={55}><Combo aria-label="Dimensione" defaultValue="12"><option>12</option></Combo><Down /></SelectWrap>
              </Row>
              <ToolSet $w={44}><Tool $gap={1} $font={`bold 17px ${SERIF}`}>A<Up /></Tool><Tool $gap={1} $font={`bold 13px ${SERIF}`}>A<DownHigh /></Tool></ToolSet>
              <ToolSet $w={24}><Tool aria-label="Cancella formattazione"><Eraser /></Tool></ToolSet>
            </Row>
            <Row $gap={4}>
              <ToolSet $w={184}>
                <Tool $font={`800 12px ${UI}`}>G</Tool><Tool $font={`italic bold 14px ${SERIF}`}>C</Tool>
                <Tool $grow={2} $gap={9} $font={`bold 14px ${SERIF}`}><u>S</u><Down /></Tool><Tool $font={`bold 10px ${UI}`}><s>abc</s></Tool>
                <Tool $font={`bold 12px ${UI}`}>x₂</Tool><Tool $font={`bold 12px ${UI}`}>x²</Tool>
                <Tool $font={`bold 12px ${SERIF}`} $gap={2}>Aa<Down /></Tool>
              </ToolSet>
              <ToolSet $w={67}><Tool aria-label="Evidenziatore"><Highlight /><Down /></Tool><Tool aria-label="Colore carattere"><FontColor /><Down /></Tool></ToolSet>
            </Row>
          </Stack>
        </GroupBody>
        <GroupLabel><span>Carattere</span><Launcher /></GroupLabel>
      </Group>
      <Group $w={209}>
        <GroupBody $pad="9px 3px 0">
          <Stack $gap={8}>
            <Row $gap={4}>
              <ToolSet $w={98}>
                <Tool aria-label="Elenco puntato"><Bullets kind="dot" /><Down /></Tool><Tool aria-label="Elenco numerato"><Bullets kind="num" /><Down /></Tool>
                <Tool aria-label="Elenco a più livelli"><Bullets kind="multi" /><Down /></Tool>
              </ToolSet>
              <ToolSet $w={45}><Tool aria-label="Riduci rientro"><Indent /></Tool><Tool aria-label="Aumenta rientro"><Indent right /></Tool></ToolSet>
              <ToolSet $w={24}><Tool aria-label="Ordina"><Sort /></Tool></ToolSet>
              <ToolSet $w={24}><Tool $font={`bold 16px ${RULER}`}>¶</Tool></ToolSet>
            </Row>
            <Row $gap={3}>
              <ToolSet $w={94}>
                <Tool aria-label="A sinistra"><Lines rows={[[0, 14], [0, 10], [0, 14], [0, 10], [0, 14]]} /></Tool>
                <Tool aria-label="Al centro"><Lines rows={[[0, 14], [2, 12], [0, 14], [2, 12], [0, 14]]} /></Tool>
                <Tool aria-label="A destra"><Lines rows={[[0, 14], [4, 14], [0, 14], [4, 14], [0, 14]]} /></Tool>
                <Tool $on aria-label="Giustifica"><Lines rows={full} /></Tool>
              </ToolSet>
              <ToolSet $w={32}><Tool aria-label="Interlinea"><Spacing /><Down /></Tool></ToolSet>
              <ToolSet $w={70}><Tool aria-label="Sfondo"><Bucket /><Down /></Tool><Tool aria-label="Bordi"><Borders /><Down /></Tool></ToolSet>
            </Row>
          </Stack>
        </GroupBody>
        <GroupLabel><span>Paragrafo</span><Launcher /></GroupLabel>
      </Group>
      <WideGroup>
        <GroupBody $pad="4px 3px 0" $gap={3}>
          <Gallery>
            {tiles.map(([sample, name, font, color, line], i) => (
              <StyleTile key={i} $font={font} $color={color} $line={line}><b>{sample}</b><span>{name}</span></StyleTile>
            ))}
            <GalleryScroll>
              <button aria-label="Su"><Down /></button><button aria-label="Giù"><Down c="#9a9fa8" /></button><button aria-label="Altro"><Down s={8} /></button>
            </GalleryScroll>
          </Gallery>
          <BigButton $w={44} $gap={5}><CambiaIcon /><span>Cambia<br /><Inline>stili <Down /></Inline></span></BigButton>
        </GroupBody>
        <GroupLabel><span>Stili</span><Launcher /></GroupLabel>
      </WideGroup>
      <Group $w={93}>
        <GroupBody $pad="2px 6px 0">
          <Stack>
            <LineButton><Binoculars />Trova<Down /></LineButton>
            <LineButton><Replace />Sostituisci</LineButton>
            <LineButton><Pointer />Seleziona<Down /></LineButton>
          </Stack>
        </GroupBody>
        <GroupLabel><span>Modifica</span></GroupLabel>
      </Group>
    </Ribbon>
  );
}

export default function App() {
  return (
    <Screen>
      <Global />
      <OfficeButton aria-label="Pulsante Office"><Office /></OfficeButton>
      <TitleBar>
        <QuickBar>
          <QuickButton $w={23} aria-label="Salva"><Save /></QuickButton>
          <QuickButton $w={32} aria-label="Annulla"><Undo /><Down /></QuickButton>
          <QuickButton $w={18} aria-label="Ripeti"><Redo /></QuickButton>
          <SelectWrap $w={84}><QuickFont aria-label="Carattere" defaultValue="Palatino Lino"><option>Palatino Lino</option></QuickFont><Down /></SelectWrap>
          <QuickButton $w={34} aria-label="Stili rapidi"><APen /><Down /></QuickButton>
          <QuickButton $w={16} aria-label="Anteprima di stampa"><PageFind /></QuickButton>
        </QuickBar>
        <QuickMore aria-label="Personalizza"><svg width="6" height="7" viewBox="0 0 6 7"><path d="M0 .5h6M0 3h6L3 6.500z" fill="#3d5277" stroke="#3d5277" strokeWidth=".7" /></svg></QuickMore>
        <DocTitle>Documento1 - Microsoft Word</DocTitle>
        <WindowButtons>
          <button aria-label="Riduci"><svg width="11" height="10" viewBox="0 0 11 10"><path d="M2 7.500h7" stroke="#9aa0ab" strokeWidth="2" /></svg></button>
          <button aria-label="Ripristina"><svg width="11" height="10" viewBox="0 0 11 10"><path d="M3.500 3V1.500h6v5H8M1.500 3.500h6v5h-6zM1.500 4.500h6" stroke="#9aa0ab" fill="none" /></svg></button>
          <button aria-label="Chiudi"><Cross c="#9aa0ab" s={10} /></button>
        </WindowButtons>
      </TitleBar>
      <TabStrip>
        <RibbonTab $active>Home</RibbonTab>
        {['Inserisci', 'Layout di pagina', 'Riferimenti', 'Lettere', 'Revisione', 'Visualizza', 'Componenti aggiuntivi'].map(t => <RibbonTab key={t}>{t}</RibbonTab>)}
        <Spacer /><button aria-label="Guida"><HelpBadge /></button>
      </TabStrip>
      <RibbonBar />
      <Work>
        <RulerColumn>
          <TabPicker aria-label="Tabulazione"><span><svg width="6" height="6" viewBox="0 0 6 6"><path d="M1 0v5h5" stroke="#222" strokeWidth="2" fill="none" /></svg></span></TabPicker>
          <VerticalRuler>
            {verticalNumbers.map(n => (
              <React.Fragment key={n}><Tick $turn>·</Tick><Tick $turn>ı</Tick><Tick $turn>·</Tick><Tick $turn>{n}</Tick></React.Fragment>
            ))}
          </VerticalRuler>
        </RulerColumn>
        <PageColumn>
          <HorizontalRuler>
            <RulerScale>
              {rulerNumbers.map((n, i) => (
                <React.Fragment key={i}><Tick>{n}</Tick><Tick>·</Tick><Tick>ı</Tick><Tick>·</Tick></React.Fragment>
              ))}
            </RulerScale>
          </HorizontalRuler>
          <IndentMark $left={274} $top={4} width="10" height="8" viewBox="0 0 10 8"><path d="M.5.500h9v2L5 7 .5 2.500z" fill="#eef3fb" stroke="#5a7099" /></IndentMark>
          <IndentMark $left={163} $top={12} width="9" height="14" viewBox="0 0 9 14"><path d="M4.500.5l4 4v8.500h-8V4.500zM.5 8.500h8" fill="#dfe8f6" stroke="#5a7099" /></IndentMark>
          <Page>
            <Heading>1.1: tesi</Heading>
            <Line $indent $lh={38}>Dice Monella</Line>
            <Heading $space={31}>1.2: antitesi</Heading>
            <Line $indent $lh={36}>Dice Russo 2</Line>
            <Line $space={6}>sarebbe provato da un</Line>
            <Line $indent $space={12}>Socratis oculi</Line>
            <Line>caerulei non erant. Socratis</Line>
            <Line>Socratis oculi caerulei non</Line>
            <Line $indent $space={11}>E Russo crede a Seneca.</Line>
          </Page>
        </PageColumn>
        <ScrollColumn>
          <svg width="11" height="4" viewBox="0 0 11 4"><path d="M0 1h11v2H0z" fill="#2f456e" /></svg>
          <RulerToggle aria-label="Righello"><svg width="12" height="11" viewBox="0 0 12 11"><path d="M.5.500h7v6h-7zM4.500 4.500h7v6h-7z" fill="#fff" stroke="#555" /></svg></RulerToggle>
          <ScrollTrack>
            <svg width="9" height="6" viewBox="0 0 9 6"><path d="M0 6L4.500 1 9 6z" fill="#3c5079" /></svg>
            <ScrollThumb><Lines w={8} c="#6a7890" rows={[[0, 8], [0, 8], [0, 8], [0, 8]]} /></ScrollThumb>
            <ScrollRest />
            <svg width="9" height="6" viewBox="0 0 9 6"><path d="M0 0L4.500 5 9 0z" fill="#3c5079" /></svg>
          </ScrollTrack>
          <PageJump><Jump kind="up" /><Jump kind="dot" /><Jump kind="down" /></PageJump>
        </ScrollColumn>
      </Work>
      <StatusBar>
        <StatusItem>Pagina: 1 di 1</StatusItem><StatusItem>Parole: 92</StatusItem><Spell />
        <StatusItem $l={12}>Italiano (Italia)</StatusItem>
        <Spacer />
        <ZoomRight>
          <ViewSet>
            <button aria-label="Layout di stampa"><Lines w={10} c="#555" rows={[[0, 10], [0, 10], [0, 10], [0, 10], [0, 10]]} /></button>
            <button aria-label="Lettura"><svg width="12" height="11" viewBox="0 0 12 11"><path d="M.5 1.500l5 1v8l-5-1zM11.500 1.500l-5 1v8l5-1z" fill="#fff" stroke="#555" /></svg></button>
            <button aria-label="Web"><svg width="13" height="12" viewBox="0 0 13 12"><path d="M.5.500h9v9h-9zM2 3h6M2 5h6" fill="#fff" stroke="#666" /><circle cx="9.500" cy="8.500" r="3" fill="#3f8a8a" /></svg></button>
            <button aria-label="Struttura"><Lines w={10} c="#667" rows={[[0, 8], [3, 10], [3, 10], [5, 10], [0, 8]]} /></button>
            <button aria-label="Bozza"><Lines w={10} c="#444" rows={[[0, 10], [0, 10], [0, 10], [0, 10], [0, 10]]} /></button>
          </ViewSet>
          <ZoomValue>148%</ZoomValue>
          <Zoom /><ZoomLine><svg width="9" height="13" viewBox="0 0 9 13"><path d="M.5.500h8v8l-4 4-4-4z" fill="#eef2f8" stroke="#4f6180" /></svg></ZoomLine><Zoom plus />
        </ZoomRight>
      </StatusBar>
      <Taskbar>
        <Start><Flag />start</Start>
        <QuickLaunch><People /><Desk /><Chrome /><span>»</span></QuickLaunch>
        <Task><Chrome />Laboratorio Informati...</Task>
        <Task><JabRef />JabRef - C:\Documen...</Task>
        <Task $on><WordIcon />Documento1 - Micros...</Task>
        <Task><WordIcon />Documento3 - Micros...</Task>
        <Spacer />
        <DeskTools>Desktop<span>»</span><b>IT</b></DeskTools>
        <Tray>
          <svg width="17" height="18" viewBox="0 0 17 18"><circle cx="8.500" cy="9" r="8" fill="#2e9be8" stroke="#c2e4fb" /><path d="M10.500 5L6.500 9l4 4" stroke="#fff" strokeWidth="2" fill="none" /></svg>
          <svg width="15" height="14" viewBox="0 0 15 14"><path d="M1 1h12v12H1z" fill="#b11a17" /><path d="M3 11c3-3 4-6 4-8 0 4 2 5 5 6-4-1-6 0-9 2z" stroke="#fff" fill="none" /><circle cx="12" cy="2.500" r="2" fill="#f4c8c0" /></svg>
          <svg width="15" height="15" viewBox="0 0 15 15"><path d="M2 1l7 2 1 6-6 1z" fill="#46a83e" /><path d="M5 9l6-2 3 4-6 3z" fill="#d9dde3" stroke="#5b6570" /></svg>
          <svg width="15" height="15" viewBox="0 0 15 15"><path d="M6.500 1.500h8v6h-8zM1.500 5.500h7v6h-7z" fill="#6a7be0" stroke="#dfe4ee" /><path d="M3 13.500h5M10 9.500h4" stroke="#cdd5e2" strokeWidth="2" /></svg>
          <time>13.42</time>
        </Tray>
      </Taskbar>
      <StylesPane />
      <ModifyDialog />
      <ParagraphDialog />
    </Screen>
  );
}
